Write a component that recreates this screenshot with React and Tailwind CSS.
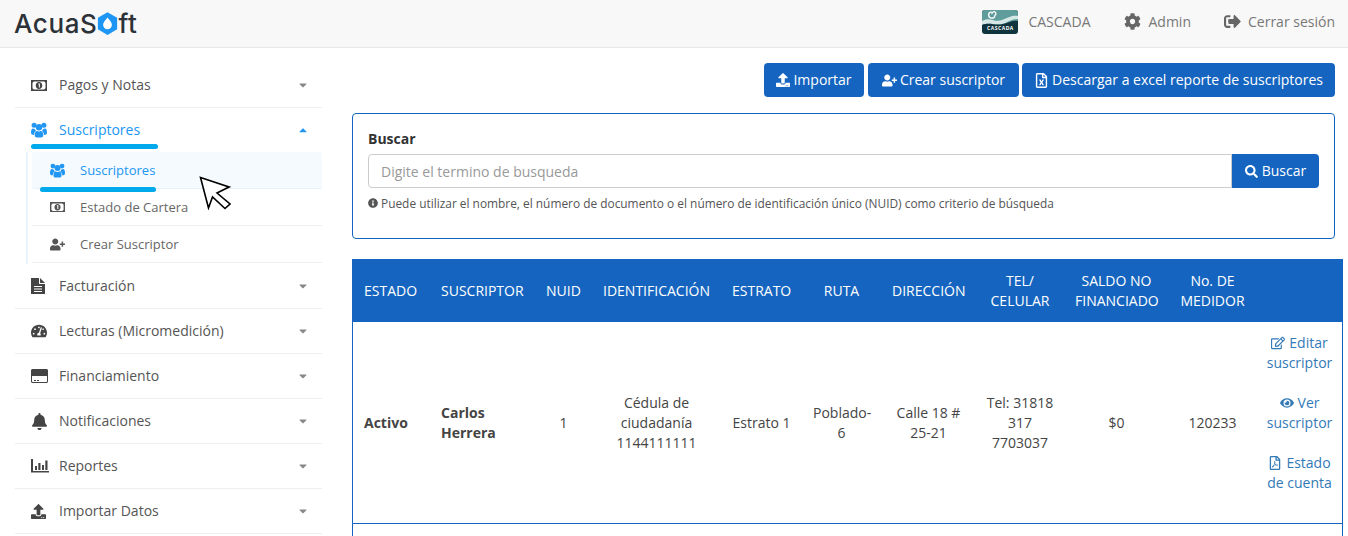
import React from "react";
import {
  FaBell,
  FaCaretDown,
  FaCaretUp,
  FaCog,
  FaEye,
  FaInfoCircle,
  FaRegEdit,
  FaRegFileExcel,
  FaRegFilePdf,
  FaSearch,
  FaSignOutAlt,
  FaTachometerAlt,
  FaUpload,
  FaUserPlus,
} from "react-icons/fa";

// iconos dibujados a mano, los de react-icons no se parecen a los de la captura
const UsersIcon = ({ size = 16 }) => (
  <svg viewBox="0 0 16 16" width={size} height={size} fill="currentColor">
    <circle cx="3.100" cy="3.300" r="2.500" />
    <circle cx="12.900" cy="3.300" r="2.500" />
    <path d="M0 10.800C0 8 .8 6.500 2 6.500c.7 0 1.200.5 2 .8.300 1 .8 1.500 1.200 1.800-1.200.5-2 1.700-2.200 3.900C1.200 13 0 12.500 0 10.800z" />
    <path d="M16 10.800c0-2.800-.8-4.300-2-4.300-.7 0-1.200.5-2 .8-.3 1-.8 1.500-1.200 1.800 1.200.5 2 1.700 2.200 3.900 1.800 0 3-.5 3-2.200z" />
    <circle cx="8" cy="5.300" r="3.200" />
    <path d="M3.700 13.300c0-2.700 1-4.300 2.300-4.300.6 0 1 .6 2 .6s1.400-.6 2-.6c1.300 0 2.300 1.600 2.300 4.300 0 1.500-1 2.200-2.300 2.200H6c-1.300 0-2.300-.7-2.300-2.200z" />
  </svg>
);

const MoneyIcon = ({ size = 16 }) => (
  <svg viewBox="0 0 16 11" width={size} height={(size * 11) / 16} fill="currentColor">
    <path
      fillRule="evenodd"
      d="M0 0h16v11H0zM2.800 1.500 1.500 2.800v5.400l1.300 1.300h10.400l1.300-1.300V2.800l-1.300-1.300z"
    />
    <path
      fillRule="evenodd"
      d="M8 2c2 0 3.300 1.600 3.300 3.500S10 9 8 9 4.700 7.400 4.700 5.500 6 2 8 2zM7.300 3.500v1h.5v3h1.100v-4z"
    />
  </svg>
);

const FileIcon = () => (
  <svg viewBox="0 0 14 16" width={14} height={16} fill="currentColor">
    <path d="M9 0v4.500c0 .3.200.5.500.5H14z" />
    <path
      fillRule="evenodd"
      d="M0 0h8v5.500c0 .3.200.5.500.5H14v10H0zM3 8v1h8V8zm0 2.500v1h8v-1zM3 13v1h8v-1z"
    />
  </svg>
);

const CardIcon = () => (
  <svg viewBox="0 0 17 14" width={17} height={14} fill="currentColor">
    <path
      fillRule="evenodd"
      d="M1.500 0h14c.8 0 1.500.7 1.500 1.500v11c0 .8-.7 1.500-1.500 1.500h-14C.7 14 0 13.300 0 12.500v-11C0 .7.700 0 1.500 0zM1 7v5.500c0 .3.200.5.500.5h14c.3 0 .5-.2.500-.5V7zM3 11h2v1H3zm3 0h2v1H6z"
    />
  </svg>
);

const BarsIcon = () => (
  <svg viewBox="0 0 18 14" width={18} height={14} fill="currentColor">
    <path d="M1 0h1v12h16v1.500H0V0zM4 7h2v4H4zM7.300 4H9.500v7H7.300zM11 6h2v5h-2zM14.300 1.500h2.200V11h-2.200z" />
  </svg>
);

const Logo = () => (
  <div className="flex items-center font-['Inter',sans-serif] text-[26px] font-medium leading-none tracking-[0.6px] text-[#2c3238]">
    <span>AcuaS</span>
    <svg viewBox="0 0 24 26" className="h-[25px] w-[21px]">
      <path d="M12 0 23 6.500v13L12 26 1 19.500v-13z" fill="#1e96f5" />
      <path d="M12 6c3 3.500 5 6 5 8.500a5 5 0 0 1-10 0C7 12 9 9.500 12 6z" fill="#fff" />
    </svg>
    <span>ft</span>
  </div>
);

const CascadaLogo = () => (
  <div className="relative h-6 w-9 overflow-hidden rounded-[3px] bg-[#10333d]">
    <svg viewBox="0 0 36 24" className="absolute inset-0 h-full w-full">
      <rect width="36" height="15" fill="#5f9c9c" />
      <path d="M0 11c8-5 12 2 20-1s10-5 16-4v3c-7 0-9 3-16 5s-12-2-20 1z" fill="#d5e8e6" />
      <path d="M0 15c8-3 13 1 21-1s10-4 15-3v6H0z" fill="#10333d" />
      <path d="M9.500 1.800a3.200 3.200 0 1 0 3.500 3.600 2 2 0 1 0-3-1.200" fill="none" stroke="#fff" strokeWidth="1.300" />
    </svg>
    <span className="absolute inset-x-0 bottom-[2px] text-center text-[5px] font-bold leading-[7px] tracking-[0.5px] text-white">
      CASCADA
    </span>
  </div>
);

const menuTop = [{ icon: MoneyIcon, label: "Pagos y Notas" }];

const menuBottom = [
  { icon: FileIcon, label: "Facturación" },
  { icon: () => <FaTachometerAlt size={16} />, label: "Lecturas (Micromedición)" },
  { icon: CardIcon, label: "Financiamiento" },
  { icon: () => <FaBell size={17} />, label: "Notificaciones" },
  { icon: BarsIcon, label: "Reportes" },
  { icon: () => <FaUpload size={15} />, label: "Importar Datos" },
];

const MenuItem = ({ icon: Icon, label }) => (
  <div className="flex h-[45px] items-center border-b border-[#eeeeee] pr-[13px] pl-4 text-[#555]">
    <span className="flex w-7 text-[#444]">
      <Icon />
    </span>
    <span className="flex-1">{label}</span>
    <FaCaretDown size={12} className="text-[#888]" />
  </div>
);

const SubItem = ({ icon: Icon, label, active }) => (
  <div
    className={
      active
        ? "flex h-[37px] items-center rounded-[3px] border-b border-[#e8f0f8] bg-[#f5fafe] pl-[18px] text-[13px] text-[#2196f3]"
        : "flex h-[37px] items-center border-b border-[#eeeeee] pl-[18px] text-[13px] text-[#666]"
    }
  >
    <span className={active ? "w-[30px] text-[#2196f3]" : "w-[30px] text-[#555]"}>
      <Icon size={15} />
    </span>
    {label}
  </div>
);

const Sidebar = () => (
  <aside className="relative w-[307px] shrink-0 pt-[15px]">
    {menuTop.map((m) => (
      <MenuItem key={m.label} {...m} />
    ))}
    <div className="flex h-[44px] items-center pr-[13px] pl-4 text-[#2196f3]">
      <span className="w-7">
        <UsersIcon />
      </span>
      <span className="flex-1">Suscriptores</span>
      <FaCaretUp size={12} />
    </div>
    <div className="ml-[11px] border-l-2 border-[#e8f3fb] pb-px pl-1">
      <SubItem icon={UsersIcon} label="Suscriptores" active />
      <SubItem icon={MoneyIcon} label="Estado de Cartera" />
      <SubItem icon={FaUserPlus} label="Crear Suscriptor" />
    </div>
    {menuBottom.map((m) => (
      <MenuItem key={m.label} {...m} />
    ))}

    {/* marcas azules y cursor pintados encima de la captura */}
    <div className="absolute top-[96px] left-4 h-[5px] w-[127px] rounded-full bg-[#00a8ec]" />
    <div className="absolute top-[139px] left-[25px] h-[5px] w-[116px] rounded-full bg-[#00a8ec]" />
    <svg viewBox="0 0 32 34" className="absolute top-[128px] left-[184px] h-[34px] w-8">
      <path d="M1.500 1.500 30 11 18 17l13 11-5 4.500-12.500-11.500-4 11z" fill="#fff" stroke="#000" strokeWidth="1.600" />
    </svg>
  </aside>
);

const ActionButton = ({ icon: Icon, iconSize = 14, width, children }) => (
  <button className={`flex h-[34px] items-center justify-center gap-[3px] rounded bg-[#1565c0] text-white ${width}`}>
    <Icon size={iconSize} />
    {children}
  </button>
);

const headers = [
  { label: "ESTADO", width: "w-[77px]", align: "text-left" },
  { label: "SUSCRIPTOR", width: "w-[105px]", align: "text-left" },
  { label: "NUID", width: "w-[57px]" },
  { label: "IDENTIFICACIÓN", width: "w-[129px]" },
  { label: "ESTRATO", width: "w-[81px]" },
  { label: "RUTA", width: "w-[79px]" },
  { label: "DIRECCIÓN", width: "w-[95px]" },
  { label: "TEL/ CELULAR", width: "w-[88px]" },
  { label: "SALDO NO FINANCIADO", width: "w-[105px]" },
  { label: "No. DE MEDIDOR", width: "w-[87px]" },
  { label: "", width: "w-[86px]" },
];

const RowLink = ({ icon: Icon, first, rest }) => (
  <a className="block text-[#337ab7]">
    <Icon size={14} className="mr-1 inline-block align-[-2px]" />
    {first}
    <br />
    {rest}
  </a>
);

const SubscribersTable = () => (
  <div className="mt-5 w-[991px] border-x border-[#1565c0]">
    <table className="w-full table-fixed border-collapse leading-5 text-[#444]">
      <colgroup>
        {headers.map((h, i) => (
          <col key={i} className={h.width} />
        ))}
      </colgroup>
      <thead>
        <tr className="h-[63px] bg-[#1565c0] font-normal text-white">
          {headers.map((h, i) => (
            <th key={i} className={`px-[11px] font-normal ${h.align || "text-center"}`}>
              {h.label}
            </th>
          ))}
        </tr>
      </thead>
      <tbody>
        <tr className="h-[201px] border-b border-[#1565c0] text-center [&>td]:pt-[2px]">
          <td className="px-[11px] text-left font-bold">Activo</td>
          <td className="px-[11px] text-left font-bold">Carlos Herrera</td>
          <td className="px-[11px]">1</td>
          <td className="px-[11px]">Cédula de ciudadanía 1144111111</td>
          <td className="px-[11px]">Estrato 1</td>
          <td className="px-[11px]">Poblado-6</td>
          <td className="px-[11px]">Calle 18 # 25-21</td>
          <td className="px-[8px]">Tel: 31818 317 7703037</td>
          <td className="px-[11px]">$0</td>
          <td className="px-[11px]">120233</td>
          <td className="pr-[4px] pl-[5px]">
            <div className="flex flex-col gap-5 pb-5">
              <RowLink icon={FaRegEdit} first="Editar" rest="suscriptor" />
              <RowLink icon={FaEye} first="Ver" rest="suscriptor" />
              <RowLink icon={FaRegFilePdf} first="Estado" rest="de cuenta" />
            </div>
          </td>
        </tr>
      </tbody>
    </table>
    <div className="h-10" />
  </div>
);

const App = () => {
  return (
    <div className="h-[536px] w-[1348px] overflow-hidden bg-white font-['Open_Sans',sans-serif] text-sm">
      <header className="flex h-[48px] items-center justify-between border-b border-[#e7e7e7] bg-[#f8f8f8] pr-[13px] pl-[14px] text-[#777]">
        <Logo />
        <div className="-mt-1 flex items-center">
          <CascadaLogo />
          <span className="ml-[10px]">CASCADA</span>
          <FaCog size={17} className="ml-[34px] text-[#666]" />
          <span className="ml-[7px]">Admin</span>
          <FaSignOutAlt size={17} className="ml-[33px] text-[#666]" />
          <span className="ml-[7px]">Cerrar sesión</span>
        </div>
      </header>

      <div className="flex pl-[15px]">
        <Sidebar />
        <main className="ml-[30px] w-[983px] pt-[15px]">
          <div className="flex justify-end gap-[3px]">
            <ActionButton icon={FaUpload} width="mr-px w-[100px]">Importar</ActionButton>
            <ActionButton icon={FaUserPlus} iconSize={15} width="w-[151px]">Crear suscriptor</ActionButton>
            <ActionButton icon={FaRegFileExcel} iconSize={15} width="w-[313px]">
              Descargar a excel reporte de suscriptores
            </ActionButton>
          </div>

          <section className="mt-4 h-[126px] rounded border border-[#1565c0] px-[15px] pt-[15px]">
            <label className="block font-bold leading-5 text-[#333]">Buscar</label>
            <div className="mt-[5px] flex h-[34px]">
              <input
                className="h-full flex-1 rounded-l border border-[#ccc] px-3 text-sm outline-none placeholder:text-[#999]"
                placeholder="Digite el termino de busqueda"
              />
              <button className="flex w-[87px] items-center justify-center gap-1 rounded-r bg-[#1565c0] text-white">
                <FaSearch size={13} />
                Buscar
              </button>
            </div>
            <p className="mt-[6px] flex items-center gap-[3px] text-[11.9px] leading-[18px] text-[#555]">
              <FaInfoCircle size={10} />
              Puede utilizar el nombre, el número de documento o el número de identificación único (NUID) como criterio de búsqueda
            </p>
          </section>

          <SubscribersTable />
        </main>
      </div>
    </div>
  );
};

export default App;
